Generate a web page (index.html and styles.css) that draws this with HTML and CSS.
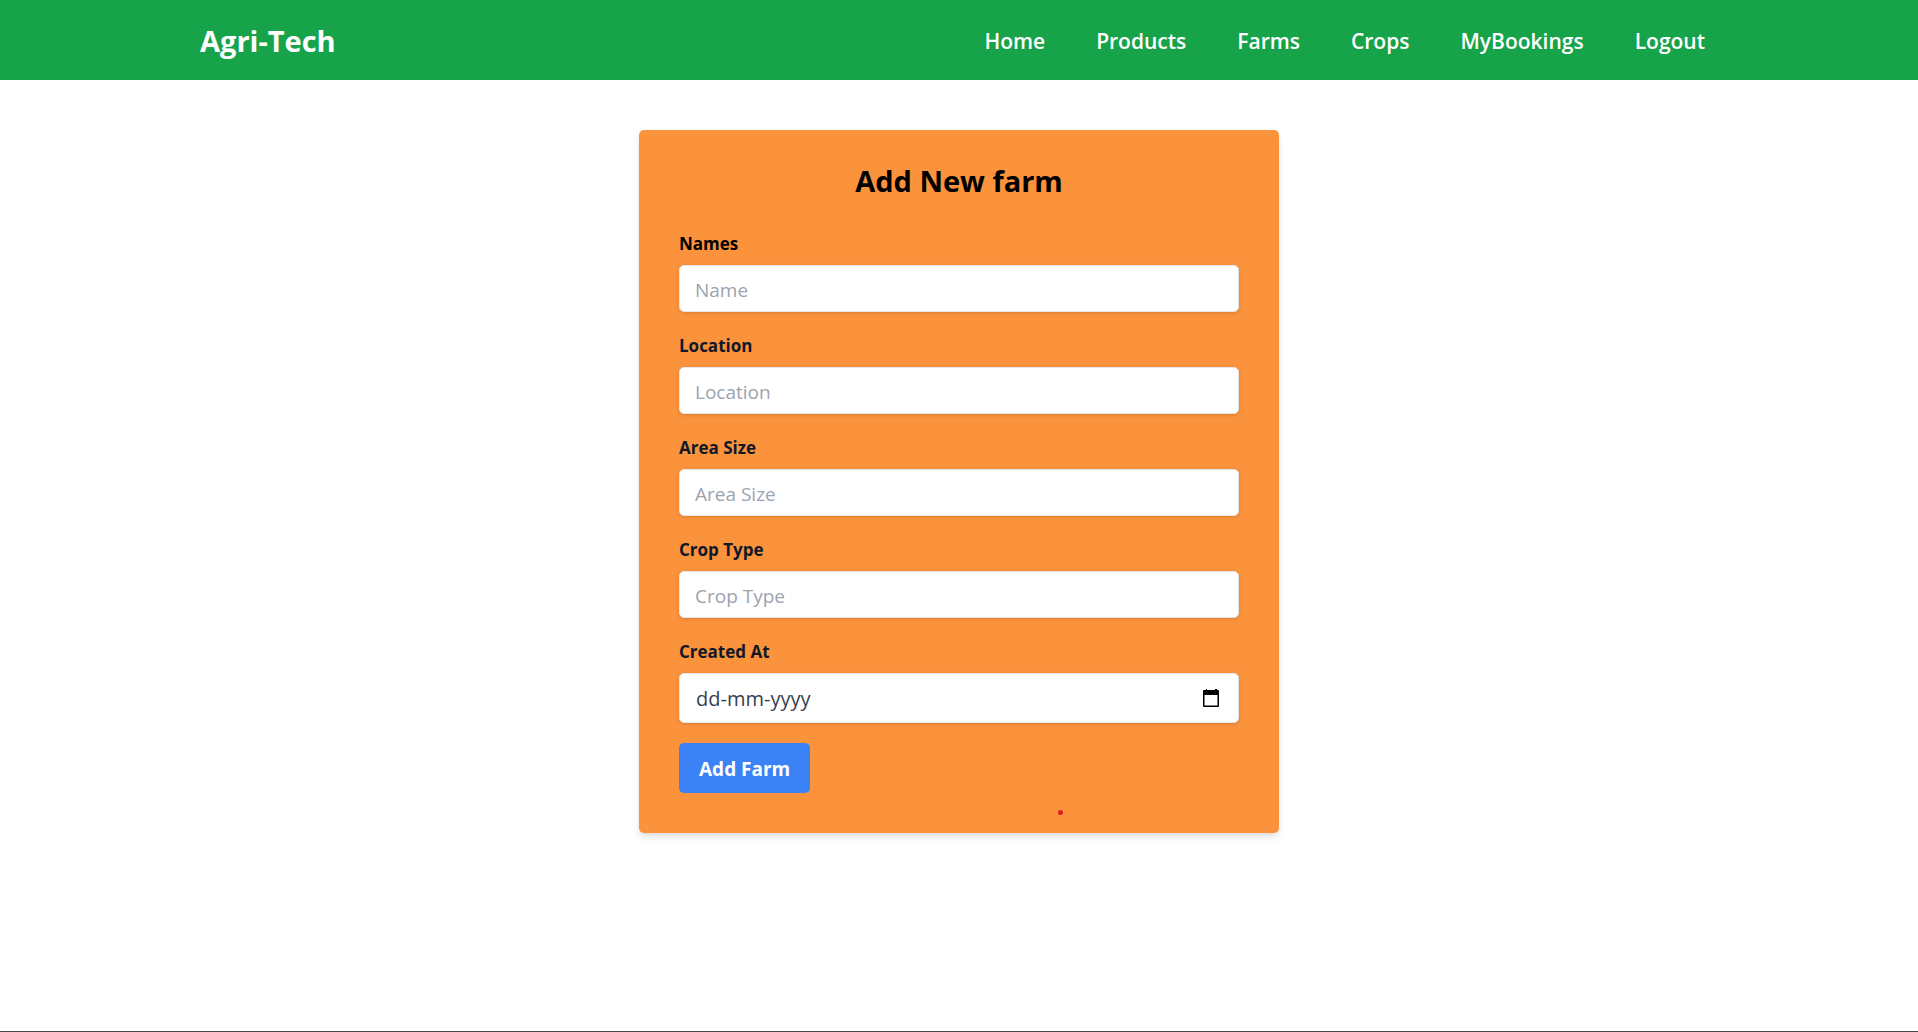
FILE: index.html
```html
<!DOCTYPE html>
<html lang="en">
<head>
  <meta charset="utf-8">
  <meta name="viewport" content="width=device-width, initial-scale=1">
  <title>Agri-Tech</title>
  <link rel="stylesheet" href="styles.css">
</head>
<body>
  <header class="navbar">
    <a class="brand" href="#">Agri-Tech</a>
    <nav class="nav-links">
      <a href="#">Home</a>
      <a href="#">Products</a>
      <a href="#">Farms</a>
      <a href="#">Crops</a>
      <a href="#">MyBookings</a>
      <a href="#">Logout</a>
    </nav>
  </header>
  <main>
    <form class="card">
      <h1 class="title">Add New farm</h1>
      <div class="field">
        <label class="label label-first" for="name">Names</label>
        <input class="input" id="name" type="text" placeholder="Name">
      </div>
      <div class="field">
        <label class="label" for="location">Location</label>
        <input class="input" id="location" type="text" placeholder="Location">
      </div>
      <div class="field">
        <label class="label" for="area">Area Size</label>
        <input class="input" id="area" type="text" placeholder="Area Size">
      </div>
      <div class="field">
        <label class="label" for="crop">Crop Type</label>
        <input class="input" id="crop" type="text" placeholder="Crop Type">
      </div>
      <div class="field">
        <label class="label" for="created">Created At</label>
        <div class="date-box">
          <input class="date-input" id="created" type="text" placeholder="dd-mm-yyyy">
          <button class="picker" type="button" aria-label="Choose date">
            <svg width="16" height="18" viewBox="0 0 16 18" aria-hidden="true">
              <path d="M2 1H3V0H4V1H12V0H14V1H15Q16 1 16 2V17Q16 18 15 18H1Q0 18 0 17V2Q0 1 1 1ZM1.500 6V16.500H14.500V6Z" fill="#000" fill-rule="evenodd"/>
            </svg>
          </button>
        </div>
      </div>
      <button class="submit" type="submit">Add Farm</button>
      <span class="dot"></span>
    </form>
  </main>
</body>
</html>
```
FILE: styles.css
```css
* {
  box-sizing: border-box;
}

body {
  margin: 0;
  min-height: 100vh;
  border-bottom: 1px solid #47474b;
  background: #fff;
  color: #000;
  font-family: "Open Sans", "Noto Sans", sans-serif;
  font-size: 19px;
  line-height: 30px;
}

.navbar {
  display: flex;
  align-items: center;
  justify-content: space-between;
  min-height: 80px;
  padding: 2px 213px 0 200px;
  background: #16a34a;
}

.navbar a {
  color: #fff;
  text-decoration: none;
}

.brand {
  font-size: 29px;
  font-weight: 700;
  line-height: 40px;
}

.nav-links {
  display: flex;
  gap: 51px;
  font-size: 21px;
  font-weight: 600;
}

.card {
  position: relative;
  max-width: 640px;
  margin: 50px auto 0;
  padding: 30px 40px 40px;
  border-radius: 5px;
  background: #fb923c;
  box-shadow: 0 5px 8px -1px rgba(0, 0, 0, 0.1), 0 2px 5px -2px rgba(0, 0, 0, 0.1);
}

.title {
  margin: 0 0 28px;
  font-size: 29px;
  font-weight: 700;
  line-height: 42px;
  text-align: center;
}

.field {
  margin-bottom: 20px;
}

.label {
  display: block;
  margin-bottom: 8px;
  color: #111827;
  font-size: 17px;
  font-weight: 700;
  line-height: 27px;
}

.label-first {
  color: #000;
}

.input,
.date-box {
  width: 100%;
  border: 1px solid #e5e7eb;
  border-radius: 5px;
  background: #fff;
  box-shadow: 0 1px 4px rgba(0, 0, 0, 0.1), 0 1px 2px -1px rgba(0, 0, 0, 0.1);
}

.input,
.date-input {
  color: #374151;
  font: inherit;
}

.input {
  display: block;
  height: 47px;
  padding: 2px 15px 0;
}

.input::placeholder {
  color: #9ca3af;
  opacity: 1;
}

.date-box {
  display: flex;
  align-items: center;
  height: 50px;
  padding: 0 19px 0 16px;
}

.date-input {
  flex: 1;
  min-width: 0;
  padding: 2px 0 0;
  border: 0;
  background: none;
  font-size: 20px;
}

.date-input::placeholder {
  color: #374151;
  opacity: 1;
}

.picker {
  display: flex;
  padding: 0;
  border: 0;
  background: none;
}

.submit {
  display: block;
  height: 50px;
  padding: 2px 20px 0;
  border: 0;
  border-radius: 5px;
  background: #3b82f6;
  color: #fff;
  font: inherit;
  font-weight: 700;
}

/* Red marker near the card's lower edge */
.dot {
  position: absolute;
  right: 216px;
  bottom: 18px;
  width: 5px;
  height: 5px;
  border-radius: 50%;
  background: #e31b23;
}
```
